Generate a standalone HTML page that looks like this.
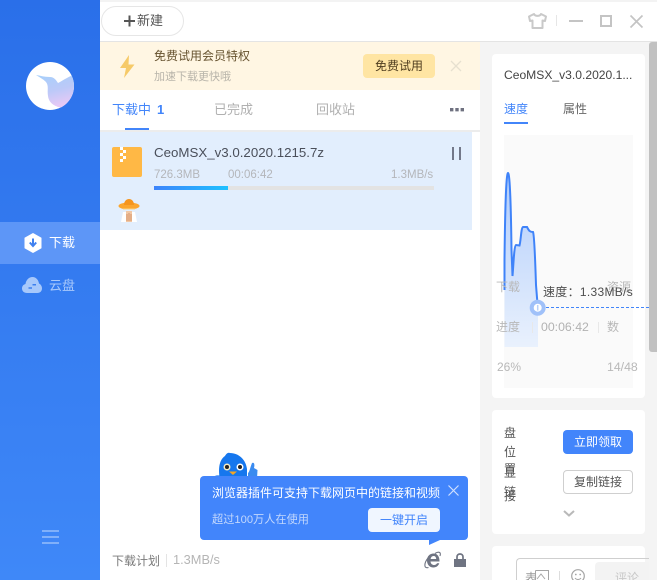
<!DOCTYPE html>
<html lang="zh-CN">
<head>
<meta charset="utf-8">
<title>下载</title>
<style>
*{box-sizing:border-box;margin:0;padding:0}
html,body{width:657px;height:580px;overflow:hidden;background:#fff}
body{position:relative;font-family:"Liberation Sans","Noto Sans CJK SC",sans-serif;font-size:12px;color:#444}
.a{position:absolute;white-space:nowrap;line-height:1}
.b{position:absolute}
svg{position:absolute;display:block;overflow:visible}
</style>
</head>
<body>
<!-- top strip -->
<div class="b" style="left:100px;top:0;width:557px;height:2px;background:#f3f3f3"></div>
<div class="b" style="left:100px;top:41px;width:557px;height:1px;background:#e4e4e4"></div>

<!-- sidebar -->
<div class="b" style="left:0;top:0;width:100px;height:580px;background:linear-gradient(180deg,#2a6fe9 0%,#3f88f8 100%)"></div>
<svg style="left:26px;top:62px" width="48" height="48" viewBox="0 0 48 48">
<defs>
<linearGradient id="bird" x1="0" y1="0" x2="0.3" y2="1"><stop offset="0" stop-color="#a6d0fb"/><stop offset=".55" stop-color="#bcc9f8"/><stop offset="1" stop-color="#e6c9f6"/></linearGradient>
<clipPath id="cc"><circle cx="24" cy="24" r="24"/></clipPath>
</defs>
<circle cx="24" cy="24" r="24" fill="#fff"/>
<path clip-path="url(#cc)" d="M10 13 C14 13.500 18 15 24 15 C28 15 30 18 32 21 C36 19 40 16 47 13 L50 30 L40 46 L37 46 C30 45 23 42 22 34 C21 28 23 24 20 20 C17 17 13 15 10 13Z" fill="url(#bird)"/>
</svg>
<div class="b" style="left:0;top:222px;width:100px;height:42px;background:#5d96f7"></div>
<svg style="left:24px;top:233px" width="18" height="20" viewBox="0 0 18 20"><path d="M9 .5 L17 5 V15 L9 19.500 L1 15 V5Z" fill="#fff" stroke="#fff" stroke-linejoin="round"/><path d="M9 5.500 V12 M5.800 9.500 L9 13 L12.200 9.500" fill="none" stroke="#3f80ef" stroke-width="2"/></svg>
<div class="a" style="left:49px;top:236px;font-size:13px;color:#fff">下载</div>
<svg style="left:22px;top:277px" width="20" height="16" viewBox="0 0 20 16"><path d="M5 16 C2 16 0 14 0 11.500 C0 9 1.500 7.500 3.500 7 C4 3 7 0 10.500 0 C14 0 16.500 3 17 6.500 C19 7.500 20 9.500 20 11.500 C20 14 18 16 15.500 16Z" fill="#a7c8fb"/><path d="M6.500 11 H10 M10.500 7.800 H14" stroke="#3c7fef" stroke-width="1.500"/></svg>
<div class="a" style="left:49px;top:279px;font-size:13px;color:#a9c9fb">云盘</div>
<svg style="left:42px;top:530px" width="17" height="14" viewBox="0 0 17 14"><path d="M0 1 H17 M0 7 H17 M0 13 H17" stroke="#a9c9fb" stroke-width="1.300"/></svg>

<!-- new button -->
<div class="b" style="left:101px;top:6px;width:83px;height:30px;border:1px solid #e6e6e6;border-radius:15px;background:#fff"></div>
<svg style="left:124px;top:15px" width="11" height="12" viewBox="0 0 11 12"><path d="M5.500 .5 V11.500 M0 6 H11" stroke="#555" stroke-width="2"/></svg>
<div class="a" style="left:137px;top:14px;font-size:13px;color:#555">新建</div>

<!-- window controls -->
<svg style="left:528px;top:13px" width="19" height="16" viewBox="0 0 19 16"><path d="M6 1 L1 3.500 L2 8 L4.500 7.500 V15 H14.500 V7.500 L17 8 L18 3.500 L13 1 C12 3.500 7 3.500 6 1Z" fill="none" stroke="#c9c9c9" stroke-width="2" stroke-linejoin="round"/></svg>
<div class="b" style="left:556px;top:15px;width:1px;height:11px;background:#e6e6e6"></div>
<div class="b" style="left:569px;top:20px;width:14px;height:2px;background:#c4c4c4"></div>
<div class="b" style="left:600px;top:15px;width:12px;height:12px;border:2px solid #c4c4c4"></div>
<svg style="left:630px;top:15px" width="13" height="13" viewBox="0 0 13 13"><path d="M.5 .5 L12.500 12.500 M12.500 .5 L.5 12.500" stroke="#c4c4c4" stroke-width="1.700"/></svg>

<!-- promo banner -->
<div class="b" style="left:100px;top:42px;width:380px;height:48px;background:#fff6e3"></div>
<svg style="left:120px;top:55px" width="15" height="23" viewBox="0 0 15 23"><path d="M9 0 L0 13 H6 L4 23 L14.500 9.500 H8.500Z" fill="#f6ca68"/></svg>
<div class="a" style="left:154px;top:50px;font-size:12px;color:#66522f">免费试用会员特权</div>
<div class="a" style="left:154px;top:72px;font-size:11px;color:#b8b4aa">加速下载更快哦</div>
<div class="b" style="left:363px;top:54px;width:72px;height:24px;background:#ffe5a3;border-radius:4px"></div>
<div class="a" style="left:375px;top:60px;font-size:12px;color:#4f3d1f">免费试用</div>
<svg style="left:451px;top:61px" width="10" height="10" viewBox="0 0 10 10"><path d="M0 0 L10 10 M10 0 L0 10" stroke="#e6e0d0" stroke-width="1.300"/></svg>

<!-- tabs -->
<div class="a" style="left:112px;top:103px;font-size:13px;color:#4285fa">下载中</div>
<div class="a" style="left:157px;top:103px;font-size:13px;font-weight:bold;color:#4285fa">1</div>
<div class="b" style="left:125px;top:128px;width:24px;height:2px;background:#4285fa"></div>
<div class="a" style="left:214px;top:103px;font-size:13px;color:#b0b0b0">已完成</div>
<div class="a" style="left:316px;top:103px;font-size:13px;color:#b0b0b0">回收站</div>
<svg style="left:450px;top:108px" width="14" height="4" viewBox="0 0 14 4"><path d="M0 0h3.400v3.400H0zM5.300 0h3.400v3.400H5.300zM10.600 0h3.400v3.400h-3.400z" fill="#6f7180"/></svg>
<div class="b" style="left:100px;top:130px;width:380px;height:2px;background:#ececec"></div>

<!-- task row -->
<div class="b" style="left:100px;top:132px;width:372px;height:98px;background:#e2eefd"></div>
<div class="b" style="left:112px;top:147px;width:30px;height:30px;background:#ffb845;border-radius:2px"></div>
<svg style="left:119px;top:147px" width="8" height="17" viewBox="0 0 8 17"><path d="M1 0h3v3H1zM4 3h3v3H4zM1 6h3v3H1zM4 9h3v3H4zM1 12h3v3H1z" fill="#fff"/></svg>
<div class="a" style="left:154px;top:146px;font-size:13.300px;color:#4a4f5a">CeoMSX_v3.0.2020.1215.7z</div>
<div class="a" style="left:154px;top:170px;font-size:11.500px;color:#b4b6ba">726.3MB</div>
<div class="a" style="left:228px;top:170px;font-size:11.500px;color:#b4b6ba">00:06:42</div>
<div class="a" style="left:391px;top:170px;font-size:11.500px;color:#b4b6ba">1.3MB/s</div>
<div class="b" style="left:154px;top:186px;width:280px;height:4px;background:#e3e3e3"></div>
<div class="b" style="left:154px;top:186px;width:74px;height:4px;background:linear-gradient(90deg,#3d84fb,#1fc1ff)"></div>
<svg style="left:452px;top:147px" width="10" height="13" viewBox="0 0 10 13"><path d="M1 0 V13 M8 0 V13" stroke="#737889" stroke-width="2"/></svg>
<svg style="left:118px;top:198px" width="22" height="25" viewBox="0 0 22 25">
<path d="M3 24 L5 14 H17 L19 24Z" fill="#fff"/>
<path d="M8 13 H14 V24 H8Z" fill="#f1c7a4"/>
<path d="M9 16v7M11 15v8M13 16v7" stroke="#d28a5c" stroke-width=".8"/>
<ellipse cx="11" cy="8" rx="10.500" ry="3.500" fill="#fba62f"/>
<path d="M6 7 C6 3 8.500 1 11 1 C13.500 1 16 3 16 7Z" fill="#f5951e"/>
<path d="M5 11 H17" stroke="#fdd27e" stroke-width="1"/>
</svg>

<!-- bottom bar -->
<div class="a" style="left:112px;top:555px;font-size:12px;color:#7a7a7a">下载计划</div>
<div class="b" style="left:166px;top:554px;width:1px;height:13px;background:#e4e4e4"></div>
<div class="a" style="left:173px;top:554px;font-size:12.800px;color:#b5b5b5">1.3MB/s</div>
<svg style="left:424px;top:551px" width="17" height="18" viewBox="0 0 17 18">
<path d="M3 9.500 C3 5 6 2.500 9.500 2.500 C13.500 2.500 15.500 5.500 15.500 10.500 H6.500 C6.800 13 8.500 14 10 14 C11.500 14 12.500 13.300 13 12.300 H15.300 C14.300 15 12.300 16.500 9.500 16.500 C5.500 16.500 3 13.500 3 9.500Z M6.600 8 H12.200 C12 5.800 11 5 9.500 5 C8 5 6.900 6 6.600 8Z" fill="#6f7482" fill-rule="evenodd"/>
<path d="M4 7 C0 12 -.5 18 4.500 16.500 M11 2.500 C14 .5 17.500 .5 16 5" fill="none" stroke="#6f7482" stroke-width="1.100"/>
</svg>
<svg style="left:454px;top:553px" width="12" height="14" viewBox="0 0 12 14"><path d="M0 6 H12 V14 H0Z" fill="#6f7482"/><path d="M3 6.500 V4 C3 2 4.300 1 6 1 C7.700 1 9 2 9 4 V6.500" fill="none" stroke="#6f7482" stroke-width="1.700"/></svg>

<!-- bird mascot -->
<svg style="left:212px;top:451px" width="47" height="30" viewBox="0 0 47 30">
<path d="M8 29 C6 18 7 9 13 5 C14 3 16 1 18 2 C27 2 34 9 35 18 L35 29Z" fill="#1677ee"/>
<path d="M0 27 C3 24 6 24 9 25 L9 29 H0Z" fill="#1677ee"/>
<path d="M36 28 V22 C37.500 21 38 17 40 12 C42 11 43 13 42 17 L45.500 19 L45 28Z" fill="#3a8bf0"/>
<circle cx="15" cy="16" r="3.500" fill="#f5ecc6"/><circle cx="28" cy="16" r="3.500" fill="#fff"/>
<circle cx="15" cy="16" r="2" fill="#222"/><circle cx="28" cy="16" r="2" fill="#222"/>
<path d="M17 20.500 H25 L21 24Z" fill="#f6a623"/>
</svg>

<!-- tooltip -->
<div class="b" style="left:200px;top:476px;width:268px;height:64px;background:#4285fb;border-radius:4px"></div>
<svg style="left:429px;top:540px" width="11" height="5" viewBox="0 0 11 5"><path d="M0 0 H11 L0 5Z" fill="#4285fb"/></svg>
<div class="a" style="left:212px;top:487px;font-size:12px;color:#fff">浏览器插件可支持下载网页中的链接和视频</div>
<svg style="left:448px;top:485px" width="11" height="11" viewBox="0 0 11 11"><path d="M.5 .5 L10.500 10.500 M10.500 .5 L.5 10.500" stroke="#cfe0fe" stroke-width="1.200"/></svg>
<div class="a" style="left:212px;top:515px;font-size:11.200px;color:#c3d8fd">超过100万人在使用</div>
<div class="b" style="left:368px;top:508px;width:72px;height:24px;background:#f0f6ff;border-radius:4px"></div>
<div class="a" style="left:380px;top:514px;font-size:12px;color:#4285fb">一键开启</div>

<!-- right panel -->
<div class="b" style="left:480px;top:42px;width:177px;height:538px;background:#f4f4f4"></div>
<div class="b" style="left:649px;top:42px;width:8px;height:310px;background:#c1c1c1;border-radius:3px 0 0 3px"></div>
<div class="b" style="left:492px;top:54px;width:153px;height:344px;background:#fff;border-radius:4px"></div>
<div class="a" style="left:504px;top:69px;font-size:12.100px;color:#444">CeoMSX_v3.0.2020.1...</div>
<div class="a" style="left:504px;top:103px;font-size:12px;color:#4285fa">速度</div>
<div class="b" style="left:504px;top:122px;width:24px;height:2px;background:#4285fa"></div>
<div class="a" style="left:563px;top:103px;font-size:12px;color:#666">属性</div>

<div class="b" style="left:504px;top:135px;width:129px;height:253px;background:#fafafa"></div>
<svg style="left:0;top:0" width="657" height="580" viewBox="0 0 657 580">
<defs><linearGradient id="fill" x1="0" y1="0" x2="0" y2="1"><stop offset="0" stop-color="#b0ccfb"/><stop offset="1" stop-color="#e9f1fd"/></linearGradient></defs>
<path d="M504.500 347 L504.500 260 C505 215 506 173 508 173 C510 173 511 210 511.500 250 L512.500 276 C513.500 265 514 246 516 245 L519.500 245.500 C521 240 521 228 523 227 L527 227 C529 231 530 232 533 232 C534.500 235 535.500 270 536 285 L538 307 L538 347Z" fill="url(#fill)"/>
<path d="M504.500 290 L504.500 260 C505 215 506 173 508 173 C510 173 511 210 511.500 250 L512.500 276 C513.500 265 514 246 516 245 L519.500 245.500 C521 240 521 228 523 227 L527 227 C529 231 530 232 533 232 C534.500 235 535.500 270 536 285 L537.500 304" fill="none" stroke="#3f83f9" stroke-width="2"/>
<path d="M546 307.500 H649" stroke="#4285fa" stroke-width="1" stroke-dasharray="3 2"/>
<circle cx="537.700" cy="307.700" r="6" fill="#fff" stroke="#a0c1f9" stroke-width="4"/>
<path d="M537.700 305 V310.500" stroke="#b7d0fa" stroke-width="1.500"/>
</svg>
<div class="a" style="left:496px;top:281px;font-size:12px;color:#b8b8b8">下载</div>
<div class="a" style="left:607px;top:281px;font-size:12px;color:#b8b8b8">资源</div>
<div class="a" style="left:543px;top:286px;font-size:12px;letter-spacing:.3px;color:#4d4d4d">速度：1.33MB/s</div>
<div class="a" style="left:496px;top:321px;font-size:12px;color:#b8b8b8">进度</div>
<div class="b" style="left:532px;top:322px;width:1px;height:11px;background:#e8e8e8"></div>
<div class="a" style="left:541px;top:321px;font-size:12.300px;color:#b2b2b2">00:06:42</div>
<div class="b" style="left:598px;top:322px;width:1px;height:11px;background:#e8e8e8"></div>
<div class="a" style="left:607px;top:321px;font-size:12px;color:#b8b8b8">数</div>
<div class="a" style="left:497px;top:361px;font-size:12px;color:#b8b8b8">26%</div>
<div class="a" style="left:607px;top:361px;font-size:12.300px;color:#b8b8b8">14/48</div>

<div class="b" style="left:492px;top:410px;width:153px;height:124px;background:#fff;border-radius:4px"></div>
<div class="a" style="left:504px;top:427px;font-size:12px;color:#555">盘</div>
<div class="a" style="left:504px;top:446px;font-size:12px;color:#555">位</div>
<div class="a" style="left:504px;top:463px;font-size:12px;color:#555">置</div>
<div class="a" style="left:504px;top:467px;font-size:12px;color:#555">显</div>
<div class="a" style="left:504px;top:486px;font-size:12px;color:#555">链</div>
<div class="a" style="left:504px;top:490px;font-size:12px;color:#555">接</div>
<div class="b" style="left:563px;top:430px;width:70px;height:24px;background:#4285fb;border-radius:4px"></div>
<div class="a" style="left:574px;top:436px;font-size:12px;color:#fff">立即领取</div>
<div class="b" style="left:563px;top:470px;width:70px;height:24px;background:#fff;border:1px solid #cfcfcf;border-radius:4px"></div>
<div class="a" style="left:574px;top:476px;font-size:12px;color:#555">复制链接</div>
<svg style="left:563px;top:510px" width="12" height="7" viewBox="0 0 12 7"><path d="M1 1 L6 5.500 L11 1" fill="none" stroke="#b9b9b9" stroke-width="2"/></svg>

<div class="b" style="left:492px;top:546px;width:153px;height:34px;background:#fff;border-radius:4px 4px 0 0"></div>
<div class="b" style="left:516px;top:558px;width:133px;height:22px;border:1px solid #cfcfcf;border-right:0;border-bottom:0;border-radius:4px 0 0 0"></div>
<div class="a" style="left:525px;top:572px;font-size:12px;color:#999">表</div>
<svg style="left:535px;top:570px" width="14" height="10" viewBox="0 0 14 10"><path d="M.5 .5 H13.500 V10 M.5 .5 V10 M2 9 L6 4 L10 9" fill="none" stroke="#a5a5a5"/></svg>
<div class="b" style="left:559px;top:571px;width:1px;height:9px;background:#ddd"></div>
<svg style="left:571px;top:569px" width="14" height="14" viewBox="0 0 14 14"><circle cx="7" cy="7" r="6.300" fill="none" stroke="#a5a5a5" stroke-width="1.200"/><path d="M4 9 C5.500 11 8.500 11 10 9" fill="none" stroke="#a5a5a5"/><circle cx="4.800" cy="5.500" r=".9" fill="#a5a5a5"/><circle cx="9.200" cy="5.500" r=".9" fill="#a5a5a5"/></svg>
<div class="b" style="left:595px;top:562px;width:54px;height:18px;background:#f3f3f3;border-radius:4px 0 0 0"></div>
<div class="a" style="left:615px;top:572px;font-size:12px;color:#c8c8c8">评论</div>
</body>
</html>
